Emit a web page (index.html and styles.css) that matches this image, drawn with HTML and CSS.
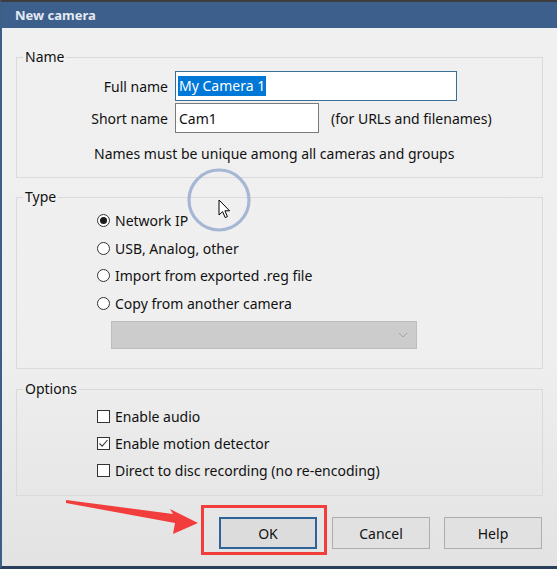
FILE: index.html
```html
<!DOCTYPE html>
<html lang="en">
<head>
<meta charset="utf-8">
<title>New camera</title>
<link rel="stylesheet" href="styles.css">
</head>
<body>
<div class="window">
  <div class="titlebar">New camera</div>
  <div class="content">
    <fieldset class="group group-name">
      <legend>Name</legend>
      <div class="field-row">
        <label class="field-label">Full name</label>
        <div class="input input-full"><span class="sel">My Camera 1</span></div>
      </div>
      <div class="field-row row-gap">
        <label class="field-label">Short name</label>
        <div class="input input-short">Cam1</div>
        <span class="hint">(for URLs and filenames)</span>
      </div>
      <p class="note">Names must be unique among all cameras and groups</p>
    </fieldset>

    <fieldset class="group group-type">
      <legend>Type</legend>
      <div class="choice radio-row"><span class="radio on"></span>Network IP</div>
      <div class="choice radio-row"><span class="radio"></span>USB, Analog, other</div>
      <div class="choice radio-row"><span class="radio"></span>Import from exported .reg file</div>
      <div class="choice radio-row"><span class="radio"></span>Copy from another camera</div>
      <div class="select">
        <svg class="chev" width="10" height="6" viewBox="0 0 10 6"><path d="M1 1 L5 5 L9 1" fill="none" stroke="#a2a2a2" stroke-width="1"/></svg>
      </div>
    </fieldset>

    <fieldset class="group group-options">
      <legend>Options</legend>
      <div class="choice check-row"><span class="check"></span>Enable audio</div>
      <div class="choice check-row"><span class="check"><svg width="11" height="11" viewBox="0 0 11 11"><path d="M1.5 5.5 L4.2 8.2 L9.5 2" fill="none" stroke="#3a3a3a" stroke-width="1.1"/></svg></span>Enable motion detector</div>
      <div class="choice check-row"><span class="check"></span>Direct to disc recording (no re-encoding)</div>
    </fieldset>

    <div class="buttons">
      <button class="btn btn-default">OK</button>
      <button class="btn">Cancel</button>
      <button class="btn">Help</button>
    </div>
  </div>

  <div class="red-box"></div>
  <svg class="red-arrow" width="557" height="569" viewBox="0 0 557 569">
    <polygon points="66,500 173,514 170,509 198,523 173,534 175,523 66,503" fill="#f23d3d"/>
  </svg>
  <svg class="focus-ring" width="70" height="70" viewBox="0 0 70 70">
    <circle cx="35" cy="35" r="30" fill="none" stroke="#a6b7d6" stroke-width="3.2"/>
  </svg>
  <svg class="cursor" width="14" height="21" viewBox="0 0 14 21">
    <path d="M1 1 L1 16 L4.6 12.6 L7.2 18.6 L9.4 17.6 L6.9 11.8 L11.6 11.8 Z" fill="#fff" stroke="#000" stroke-width="1" stroke-linejoin="round"/>
  </svg>
</div>
</body>
</html>
```

FILE: styles.css
```css
html, body {
  margin: 0;
  padding: 0;
  background: #3c5f8a;
}
body {
  font-family: "Noto Sans", "Open Sans", sans-serif;
  font-size: 14px;
  color: #111;
}
.window {
  position: relative;
  width: 557px;
  height: 569px;
  box-sizing: border-box;
  border-top: 2px solid #3d3d3d;
  border-left: 2px solid #3c5f8a;
  border-bottom: 3px solid #2a3f5e;
  display: flex;
  flex-direction: column;
  overflow: hidden;
}
.titlebar {
  height: 26px;
  flex: none;
  background: #3d5f8b;
  color: #e4eaf2;
  font-weight: 700;
  font-size: 13px;
  line-height: 26px;
  padding-left: 13px;
}
.content {
  flex: 1;
  background: linear-gradient(#f0f0f0 0%, #efefef 60%, #e3e3e3 100%);
  padding: 19px 14px 0 14px;
  display: flex;
  flex-direction: column;
}
.group {
  margin: 0;
  padding: 0;
  border: 1px solid #dadada;
  min-width: 0;
}
.group legend {
  margin-left: 6px;
  padding: 0 2px;
  line-height: 20px;
  height: 20px;
  font-size: 14px;
}
.group-name {
  padding-top: 4px;
  padding-bottom: 13px;
}
.group-type {
  margin-top: 9px;
  padding-bottom: 19px;
}
.group-options {
  margin-top: 10px;
  padding-top: 3.5px;
  padding-bottom: 11px;
}
.field-row {
  display: flex;
  align-items: center;
  height: 30px;
}
.row-gap {
  margin-top: 2px;
}
.field-label {
  width: 151px;
  text-align: right;
  margin-right: 7px;
  flex: none;
}
.input {
  box-sizing: border-box;
  height: 30px;
  background: #fff;
  border: 1px solid #7a7a7a;
  display: flex;
  align-items: center;
  padding-left: 3px;
  flex: none;
}
.input-full {
  width: 282px;
  border-color: #3a6f96;
  padding-left: 2px;
}
.input-short {
  width: 144px;
}
.sel {
  background: #0078d7;
  color: #fff;
  line-height: 20px;
  padding: 0 1px;
}
.hint {
  margin-left: 12px;
}
.note {
  margin: 11px 0 0 77px;
  line-height: 20px;
}
.choice {
  display: flex;
  align-items: center;
  padding-left: 80px;
}
.radio-row {
  height: 27.5px;
}
.check-row {
  height: 27px;
}
.radio {
  box-sizing: border-box;
  width: 13px;
  height: 13px;
  border: 1px solid #333;
  border-radius: 50%;
  background: #fff;
  margin-right: 5px;
  display: flex;
  align-items: center;
  justify-content: center;
  flex: none;
}
.radio.on::after {
  content: "";
  width: 7px;
  height: 7px;
  border-radius: 50%;
  background: #1a1a1a;
}
.check {
  box-sizing: border-box;
  width: 13px;
  height: 13px;
  border: 1px solid #333;
  background: #fff;
  margin-right: 5px;
  display: flex;
  align-items: center;
  justify-content: center;
  flex: none;
}
.check svg {
  display: block;
}
.select {
  box-sizing: border-box;
  margin: 4px 0 0 94px;
  width: 306px;
  height: 28px;
  background: #cccccc;
  border: 1px solid #bdbdbd;
  display: flex;
  align-items: center;
  justify-content: flex-end;
  padding-right: 8px;
}
.chev {
  display: block;
}
.buttons {
  display: flex;
  justify-content: flex-end;
  gap: 14px;
  margin-top: 21.5px;
  padding-right: 1px;
}
.btn {
  box-sizing: border-box;
  width: 98px;
  height: 32px;
  background: #e1e1e1;
  border: 1px solid #adadad;
  font-family: "Noto Sans", "Open Sans", sans-serif;
  font-size: 14px;
  color: #111;
  padding: 0;
}
.btn-default {
  border: 2px solid #2d6399;
  background: #dcdcdc;
  margin-right: 1px;
}
.red-box {
  position: absolute;
  left: 199px;
  top: 503px;
  width: 126px;
  height: 50px;
  box-sizing: border-box;
  border: 3px solid #f23d3d;
}
.red-arrow {
  position: absolute;
  left: -2px;
  top: -2px;
  pointer-events: none;
}
.focus-ring {
  position: absolute;
  left: 181.5px;
  top: 163px;
}
.cursor {
  position: absolute;
  left: 216px;
  top: 197px;
}
```
